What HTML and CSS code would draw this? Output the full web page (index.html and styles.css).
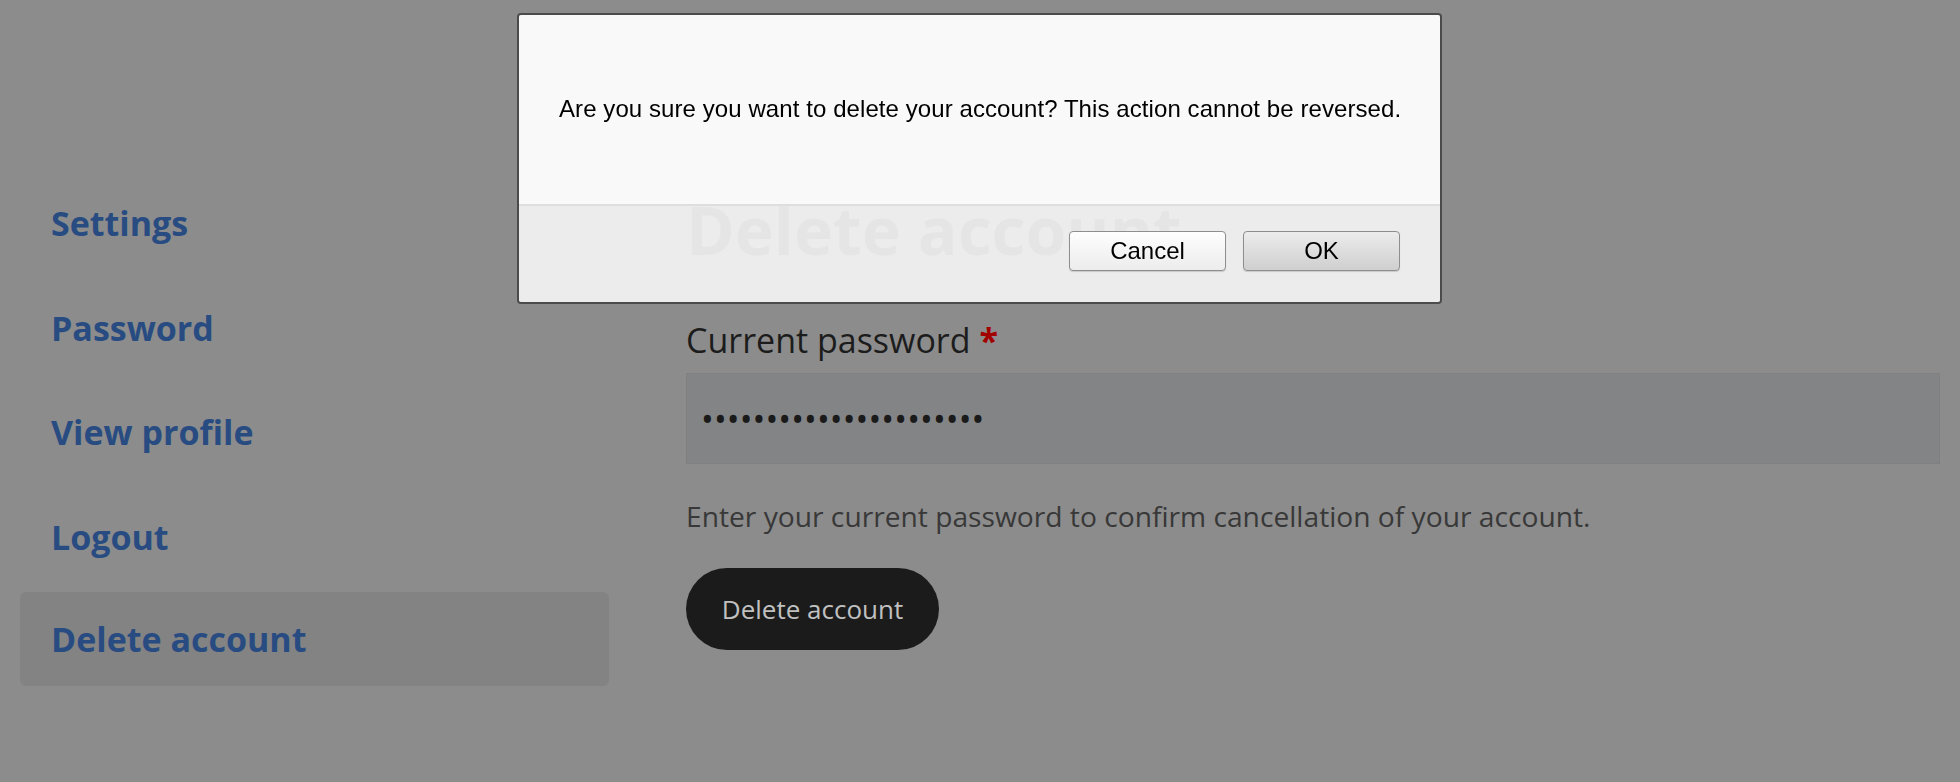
FILE: index.html
```html
<!DOCTYPE html>
<html lang="en">
<head>
<meta charset="utf-8">
<title>Delete account</title>
<link rel="stylesheet" href="styles.css">
</head>
<body>
<div class="page">
  <nav class="sidebar">
    <a class="nav-link" href="#">Settings</a>
    <a class="nav-link" href="#">Password</a>
    <a class="nav-link" href="#">View profile</a>
    <a class="nav-link" href="#">Logout</a>
    <a class="nav-link active" href="#">Delete account</a>
  </nav>
  <main class="content">
    <h1 class="title">Delete account</h1>
    <form class="form">
      <label class="label" for="pw">Current password <span class="req">*</span></label>
      <input class="input" id="pw" type="password" value="abcdefghijklmnopqrstuv">
      <p class="help">Enter your current password to confirm cancellation of your account.</p>
      <button class="submit" type="button">Delete account</button>
    </form>
  </main>
</div>
<div class="overlay"></div>
<div class="dialog" role="dialog">
  <div class="dialog-body">Are you sure you want to delete your account? This action cannot be reversed.</div>
  <div class="dialog-footer">
    <button class="dlg-btn" type="button">Cancel</button>
    <button class="dlg-btn primary" type="button">OK</button>
  </div>
</div>
</body>
</html>
```

FILE: styles.css
```css
* { box-sizing: border-box; }
html, body { margin: 0; padding: 0; }
body {
  background: #8c8c8c;
  font-family: "Open Sans", "Liberation Sans", sans-serif;
  width: 1960px;
  height: 782px;
  overflow: hidden;
}
.page {
  display: grid;
  grid-template-columns: 589px 1fr;
  column-gap: 77px;
  padding: 0 20px;
}
.sidebar {
  display: flex;
  flex-direction: column;
  gap: 10.5px;
  padding-top: 176px;
}
.nav-link {
  display: block;
  font-weight: 700;
  font-size: 34px;
  line-height: 48px;
  padding: 23px 31px;
  color: #284c82;
  text-decoration: none;
  border-radius: 6px;
}
.nav-link.active { background: #838383; margin-top: -2px; }
.content { padding-top: 190px; }
.title {
  margin: 0;
  font-size: 66px;
  line-height: 79px;
  font-weight: 700;
  color: #1a1a1a;
}
.form { display: flex; flex-direction: column; align-items: flex-start; }
.label {
  margin-top: 47px;
  font-size: 34px;
  line-height: 48px;
  color: #1c1c1c;
}
.req { color: #a30000; font-weight: 700; }
.input {
  margin-top: 9px;
  width: 100%;
  height: 91px;
  background: #838486;
  border: 1px solid #808080;
  padding: 0 14px;
  font-family: "Open Sans", sans-serif;
  font-size: 34px;
  letter-spacing: 0.1px;
  color: #1a1a1a;
  outline: none;
}
.help {
  margin: 32px 0 0;
  font-size: 28.2px;
  line-height: 40px;
  color: #383838;
}
.submit {
  margin-top: 32px;
  height: 82px;
  width: 253px;
  border: none;
  border-radius: 41px;
  background: #1b1b1b;
  color: #c0c0c0;
  font-family: "Open Sans", sans-serif;
  font-size: 26px;
}
.overlay {
  position: fixed;
  inset: 0;
  background: transparent;
}
.dialog {
  position: absolute;
  left: 517px;
  top: 13px;
  width: 925px;
  height: 291px;
  border: 2px solid #4b4b4b;
  border-radius: 4px;
  display: flex;
  flex-direction: column;
  font-family: "Liberation Sans", Arial, sans-serif;
  overflow: hidden;
}
.dialog-body {
  background: #f9f9f9;
  height: 191px;
  padding: 80px 38px 0 40px;
  font-size: 24px;
  letter-spacing: 0.08px;
  line-height: 28px;
  color: #000;
  border-bottom: 2px solid #dedede;
}
.dialog-footer {
  flex: 1;
  background: rgba(241, 241, 241, 0.947);
  display: flex;
  justify-content: flex-end;
  gap: 17px;
  padding: 25px 40px 0 0;
}
.dlg-btn {
  width: 157px;
  height: 40px;
  border: 1px solid #8e8e8e;
  border-radius: 4px;
  background: linear-gradient(#fefefe, #ececec);
  font-family: "Liberation Sans", Arial, sans-serif;
  font-size: 24px;
  color: #000;
  box-shadow: 0 1px 1px rgba(0,0,0,0.15);
  padding: 0;
}
.dlg-btn.primary { background: linear-gradient(#ececec, #cfcfcf); }
```
